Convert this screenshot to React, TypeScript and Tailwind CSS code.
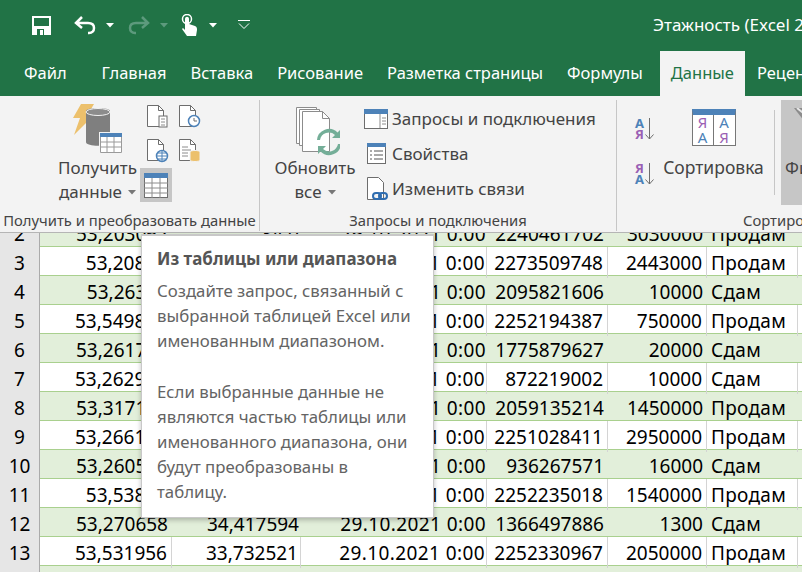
const font = "font-['Noto_Sans',sans-serif]";

const rows: [string, string, string, string, string, string, string, string][] = [
  ["2", "53,203062", "34,0", "29.10.2021 0:00", "2240461702", "3030000", "Продам", "g"],
  ["3", "53,20811", "34,4", "29.10.2021 0:00", "2273509748", "2443000", "Продам", "w"],
  ["4", "53,26377", "34,3", "29.10.2021 0:00", "2095821606", "10000", "Сдам", "g"],
  ["5", "53,549812", "33,5", "29.10.2021 0:00", "2252194387", "750000", "Продам", "w"],
  ["6", "53,261793", "34,3", "29.10.2021 0:00", "1775879627", "20000", "Сдам", "g"],
  ["7", "53,262914", "34,3", "29.10.2021 0:00", "872219002", "10000", "Сдам", "w"],
  ["8", "53,317199", "34,3", "29.10.2021 0:00", "2059135214", "1450000", "Продам", "g"],
  ["9", "53,266192", "34,3", "29.10.2021 0:00", "2251028411", "2950000", "Продам", "w"],
  ["10", "53,260512", "34,3", "29.10.2021 0:00", "936267571", "16000", "Сдам", "g"],
  ["11", "53,53811", "33,7", "29.10.2021 0:00", "2252235018", "1540000", "Продам", "w"],
  ["12", "53,270658", "34,417594", "29.10.2021 0:00", "1366497886", "1300", "Сдам", "g"],
  ["13", "53,531956", "33,732521", "29.10.2021 0:00", "2252330967", "2050000", "Продам", "w"],
  ["", "", "", "", "", "", "", "g"],
];

function Tab({ label, active }: { label: string; active?: boolean }) {
  return (
    <div className={active ? "h-[45px] mt-px ml-[5px] px-[11px] bg-[#f3f3f3] text-[#217346] flex items-center" : "h-[46px] px-[12px] text-white flex items-center"}>
      {label}
    </div>
  );
}

function Caret({ color = "#fff", className = "" }: { color?: string; className?: string }) {
  return (
    <svg width="8" height="5" viewBox="0 0 8 5" className={className}>
      <path d="M0 0h8L4 4.500z" fill={color} />
    </svg>
  );
}

function DocIcon({ children }: { children?: React.ReactNode }) {
  return (
    <svg width="22" height="24" viewBox="0 0 22 24">
      <path d="M.5 .5h11l5 5v16H.5z" fill="#fff" stroke="#6d6d6d" />
      <path d="M11.500 .5v5h5" fill="none" stroke="#6d6d6d" />
      {children}
    </svg>
  );
}

function BigDb() {
  return (
    <svg width="50" height="50" viewBox="0 0 50 50">
      <path d="M8 0h13l-7 12h6L1 31l6-17H0z" fill="#ecc06c" />
      <path d="M13 7c0-4 24-4 24 0v31c0 5-24 5-24 0z" fill="#7f7f7f" />
      <ellipse cx="25" cy="8" rx="12" ry="3.500" fill="#8c8c8c" stroke="#f3f3f3" strokeWidth="1" />
      <rect x="26" y="28" width="23" height="21" fill="#f3f3f3" />
      <rect x="27" y="29" width="22" height="20" fill="#fff" />
      <rect x="27" y="29" width="22" height="4" fill="#4d82b8" />
      <path d="M27.500 33v15.500h21V33M34 33v15M41 33v15M27 38h22M27 43h22" fill="none" stroke="#9a9a9a" />
    </svg>
  );
}

function SortAZ({ flip }: { flip?: boolean }) {
  return (
    <div className="flex items-center gap-[1px] w-[20px] h-[23px]">
      <div className="flex flex-col font-bold text-[13px] leading-[11px]">
        <span className={flip ? "text-[#9a5fb4]" : "text-[#4d82b8]"}>{flip ? "Я" : "А"}</span>
        <span className={flip ? "text-[#4d82b8]" : "text-[#9a5fb4]"}>{flip ? "А" : "Я"}</span>
      </div>
      <svg width="9" height="22" viewBox="0 0 9 22">
        <path d="M4.500 0v21M.5 16.500l4 4.500 4-4.500" fill="none" stroke="#6d6d6d" />
      </svg>
    </div>
  );
}

export default function App() {
  return (
    <div className={`w-[802px] h-[572px] overflow-hidden relative flex flex-col bg-white ${font}`}>
      {/* quick access */}
      <div className="h-[50px] bg-[#217346] flex items-center pl-[32px] shrink-0 relative">
        <svg width="19" height="19" viewBox="0 0 19 19">
          <path d="M0 0h19v19H0z" fill="#fff" />
          <path d="M2 2h15v8H2z" fill="#217346" />
          <path d="M5 13h7v6H5z" fill="#217346" />
          <path d="M8 14h3v5H8z" fill="#fff" />
        </svg>
        <svg width="22" height="20" viewBox="0 0 22 20" className="ml-[23px]">
          <path d="M8 2L2 8l6 5M2.500 8H14c4 0 6 2 6 5s-2 5-5 5h-1" fill="none" stroke="#fff" strokeWidth="2.500" />
        </svg>
        <Caret className="ml-[10px]" />
        <svg width="22" height="20" viewBox="0 0 22 20" className="ml-[14px]">
          <path d="M14 2l6 6-6 5M19.500 8H8c-4 0-6 2-6 5s2 5 5 5h1" fill="none" stroke="#5d9a7d" strokeWidth="2.500" />
        </svg>
        <Caret color="#5d9a7d" className="ml-[10px]" />
        <svg width="18" height="22" viewBox="0 0 18 22" className="ml-[12px]">
          <circle cx="7" cy="5" r="4.500" fill="none" stroke="#fff" strokeWidth="1.500" />
          <path d="M5 5c0-3 4-3 4 0v5l6 2c2 1 2 2 2 4l-1 6H7l-5-7 1-1 2 2z" fill="#fff" />
        </svg>
        <Caret className="ml-[11px]" />
        <svg width="12" height="10" viewBox="0 0 12 10" className="ml-[21px]">
          <path d="M0 .5h12M1 3.500l5 5 5-5" fill="none" stroke="#fff" />
        </svg>
        <div className="absolute left-[653px] top-[12px] text-white text-[17px] whitespace-nowrap">Этажность (Excel 2</div>
      </div>

      {/* tabs */}
      <div className="h-[46px] bg-[#217346] flex text-[16.500px] pl-[12px] shrink-0 whitespace-nowrap">
        <div className="h-[46px] pl-[12px] pr-[23px] text-white flex items-center">Файл</div>
        <Tab label="Главная" />
        <Tab label="Вставка" />
        <Tab label="Рисование" />
        <Tab label="Разметка страницы" />
        <Tab label="Формулы" />
        <Tab label="Данные" active />
        <Tab label="Рецензирование" />
      </div>

      {/* ribbon */}
      <div className="h-[137px] bg-[#f3f3f3] border-b border-[#b5b5b5] flex shrink-0 text-[#444] relative z-10 whitespace-nowrap overflow-hidden">
        <div className="w-[260px] border-r border-[#c6c6c6] h-[131px] mt-[4px] flex flex-col shrink-0">
          <div className="flex flex-1 pl-[57px]">
            <div className="w-[81px] flex flex-col items-center pt-[4px]">
              <BigDb />
              <div className="text-[17px] leading-[24px] mt-[2px]">Получить</div>
              <div className="text-[17px] leading-[24px] flex items-center gap-[6px]">данные <Caret color="#777" /></div>
            </div>
            <div className="grid grid-cols-[32px_32px] w-[64px] ml-[2px] pt-[5px] gap-y-[10px] content-start">
              <div className="pl-[7px]">
                <DocIcon>
                  <rect x="12" y="11" width="8" height="11" fill="#fff" stroke="#6d6d6d" />
                  <path d="M14 14h4M14 17h4M14 20h4" stroke="#8c8c8c" />
                </DocIcon>
              </div>
              <div className="pl-[7px]">
                <DocIcon>
                  <circle cx="15" cy="16" r="5.500" fill="#fff" stroke="#4d82b8" strokeWidth="1.500" />
                  <path d="M15 13v3h3" fill="none" stroke="#6d6d6d" />
                </DocIcon>
              </div>
              <div className="pl-[7px]">
                <DocIcon>
                  <circle cx="15" cy="17" r="5.500" fill="#fff" stroke="#4d82b8" strokeWidth="1.500" />
                  <path d="M9.500 17h11M15 11.500v11M11 14h8M11 20h8" fill="none" stroke="#4d82b8" />
                </DocIcon>
              </div>
              <div className="pl-[7px]">
                <DocIcon>
                  <path d="M3 8h6M3 11h9M3 14h6M3 17h6" stroke="#8c8c8c" />
                  <path d="M11 13c0-2 10-2 10 0v8c0 2-10 2-10 0z" fill="#ecc06c" stroke="#f3f3f3" />
                </DocIcon>
              </div>
              <div className="col-span-2 w-[32px] h-[34px] -mt-[5px] bg-[#c6c6c6] flex items-center justify-center">
                <svg width="24" height="25" viewBox="0 0 24 25">
                  <rect x=".5" y=".5" width="23" height="24" fill="#fff" stroke="#6d6d6d" />
                  <rect x="0" y="0" width="24" height="5" fill="#4d82b8" />
                  <path d="M0 10h24M0 15h24M0 20h24M8 5v20M16 5v20" stroke="#8c8c8c" />
                </svg>
              </div>
            </div>
          </div>
          <div className="text-[14.800px] text-center leading-[20px] pb-[1px]">Получить и преобразовать данные</div>
        </div>

        <div className="w-[357px] border-r border-[#c6c6c6] h-[131px] mt-[4px] flex flex-col shrink-0">
          <div className="flex flex-1 pl-[14px]">
            <div className="w-[82px] flex flex-col items-center pt-[7px]">
              <svg width="44" height="50" viewBox="0 0 44 50" className="ml-[6px]">
                <path d="M.5 .5h20v36H.5z" fill="#fff" stroke="#8c8c8c" />
                <path d="M3.500 2.500h20v36h-20z" fill="#fff" stroke="#8c8c8c" />
                <path d="M6.500 4.500h20l7 7v33h-27z" fill="#fff" stroke="#8c8c8c" />
                <path d="M26.500 4.500v7h7" fill="none" stroke="#8c8c8c" />
                <path d="M24 33a9 9 0 0 1 15-5l-3 3h8v-8l-2.500 2.500A12 12 0 0 0 21 33zM42 37a9 9 0 0 1-15 5l3-3h-8v8l2.500-2.500A12 12 0 0 0 45 37z" fill="#74ae98" />
              </svg>
              <div className="text-[17px] leading-[24px] -mt-[1px]">Обновить</div>
              <div className="text-[17px] leading-[24px] flex items-center gap-[6px]">все <Caret color="#777" /></div>
            </div>
            <div className="flex flex-col pt-[6px] gap-[10px] pl-[8px] text-[17px] leading-[25px]">
              <div className="flex items-center gap-[4px]">
                <svg width="24" height="20" viewBox="0 0 24 20">
                  <rect x=".5" y=".5" width="23" height="19" fill="#fff" stroke="#6d6d6d" />
                  <rect width="24" height="5" fill="#4d82b8" />
                  <path d="M16 5v14M18 9h4M18 12h4M18 15h4" stroke="#8c8c8c" />
                </svg>
                Запросы и подключения
              </div>
              <div className="flex items-center gap-[6px] pl-[3px]">
                <svg width="19" height="21" viewBox="0 0 19 21">
                  <rect x=".5" y=".5" width="18" height="20" fill="#fff" stroke="#6d6d6d" />
                  <rect width="19" height="4" fill="#4d82b8" />
                  <path d="M3 8h2M7 8h9M3 12h2M7 12h9M3 16h2M7 16h9" stroke="#555" />
                </svg>
                Свойства
              </div>
              <div className="flex items-center gap-[4px] pl-[3px]">
                <svg width="21" height="24" viewBox="0 0 21 24">
                  <path d="M.5 .5h11l5 5v17H.5z" fill="#fff" stroke="#6d6d6d" />
                  <rect x="6" y="16" width="8" height="6" rx="3" fill="#f3f3f3" stroke="#2f6db0" strokeWidth="2" />
                  <rect x="12" y="16" width="8" height="6" rx="3" fill="none" stroke="#2f6db0" strokeWidth="2" />
                </svg>
                Изменить связи
              </div>
            </div>
          </div>
          <div className="text-[14.800px] text-center leading-[20px] pb-[1px]">Запросы и подключения</div>
        </div>

        <div className="flex-1 flex flex-col h-[131px] mt-[4px]">
          <div className="flex flex-1 pl-[18px]">
            <div className="flex flex-col pt-[17px] gap-[22px]">
              <SortAZ />
              <SortAZ flip />
            </div>
            <div className="w-[117px] flex flex-col items-center pt-[9px]">
              <div className="w-[44px] h-[37px] border border-[#777] border-t-[6px] border-t-[#4d82b8] bg-white grid grid-cols-2 text-[15px] leading-[15px] text-center">
                <div className="border-r border-[#777]">
                  <div className="text-[#9a5fb4]">Я</div>
                  <div className="text-[#4d82b8]">А</div>
                </div>
                <div>
                  <div className="text-[#4d82b8]">А</div>
                  <div className="text-[#9a5fb4]">Я</div>
                </div>
              </div>
              <div className="text-[17.500px] leading-[25px] mt-[9px]">Сортировка</div>
            </div>
            <div className="w-px h-[85px] bg-[#c6c6c6] mt-[10px] ml-[2px] shrink-0" />
            <div className="relative ml-[6px] w-[40px] h-[105px] bg-[#c6c6c6] text-[17px] leading-[25px] pt-[55px] pl-[4px] overflow-hidden shrink-0">
              Фильтр
              <svg width="22" height="14" viewBox="0 0 22 14" className="absolute left-[13px] top-[8px]">
                <path d="M0 0h22L11 14z" fill="#8c8c8c" />
                <path d="M3 0l10 8" stroke="#e6e6e6" strokeWidth="2" />
              </svg>
            </div>
          </div>
          <div className="text-[14.800px] leading-[20px] pb-[1px] pl-[126px]">Сортировка</div>
        </div>
      </div>

      {/* sheet */}
      <div className="flex-1 overflow-hidden relative text-[19px] text-black">
        <div className="-mt-[15px]">
          {rows.map((r) => (
            <div key={r[0] || "14"} className={`grid grid-cols-[40px_132px_129px_186px_121px_99px_91px_5px] h-[29px] border-b ${r[7] === "g" ? "bg-[#e2efda]" : "bg-white"} border-[#a9d08e]`}>
              <div className="bg-[#e6e6e6] border-r border-[#ababab] flex items-center justify-center pt-[2px]">{r[0]}</div>
              <div className={`flex items-center justify-end pr-[4px] pt-[2px] ${r[7] === "w" ? "border-r border-[#d4d4d4]" : ""}`}>{r[1]}</div>
              <div className={`flex items-center justify-end pr-[2px] pt-[2px] ${r[7] === "w" ? "border-r border-[#d4d4d4]" : ""}`}>{r[2]}</div>
              <div className={`flex items-center justify-end pr-[1px] pt-[2px] tracking-[0.4px] ${r[7] === "w" ? "border-r border-[#d4d4d4]" : ""}`}>{r[3]}</div>
              <div className={`flex items-center justify-end pr-[4px] pt-[2px] ${r[7] === "w" ? "border-r border-[#d4d4d4]" : ""}`}>{r[4]}</div>
              <div className={`flex items-center justify-end pr-[4px] pt-[2px] ${r[7] === "w" ? "border-r border-[#d4d4d4]" : ""}`}>{r[5]}</div>
              <div className={`flex items-center pl-[4px] pt-[2px] tracking-[0.3px] ${r[7] === "w" ? "border-r border-[#d4d4d4]" : ""}`}>{r[6]}</div>
              <div />
            </div>
          ))}
        </div>
      </div>

      {/* tooltip */}
      <div className="absolute left-[141px] top-[234px] w-[293px] h-[284px] z-20 bg-white border-x border-b border-t-2 border-[#c8c8c8] shadow-[0_2px_5px_rgba(0,0,0,0.25)] pl-[15px] pt-[12px] text-[16.800px] leading-[25px] text-[#646464]">
        <div className="font-bold text-[17px] leading-[22px] mb-[8px] text-[#555]">Из таблицы или диапазона</div>
        <div>Создайте запрос, связанный с<br />выбранной таблицей Excel или<br />именованным диапазоном.</div>
        <div className="mt-[26px]">Если выбранные данные не<br />являются частью таблицы или<br />именованного диапазона, они<br />будут преобразованы в<br />таблицу.</div>
      </div>
    </div>
  );
}
